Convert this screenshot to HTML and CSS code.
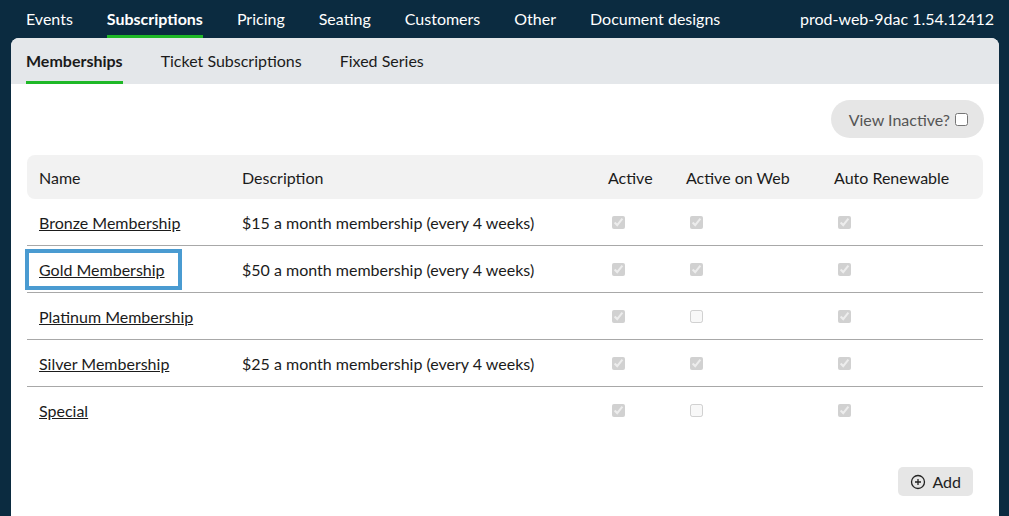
FILE: index.html
```html
<!DOCTYPE html>
<html lang="en">
<head>
  <meta charset="UTF-8">
  <title>Memberships</title>
  <link rel="stylesheet" href="styles.css">
</head>
<body>
  <nav class="topnav">
    <a class="topnav-item">Events</a>
    <a class="topnav-item active">Subscriptions</a>
    <a class="topnav-item">Pricing</a>
    <a class="topnav-item">Seating</a>
    <a class="topnav-item">Customers</a>
    <a class="topnav-item">Other</a>
    <a class="topnav-item">Document designs</a>
    <span class="version">prod-web-9dac 1.54.12412</span>
  </nav>

  <div class="panel">
    <div class="subtabs">
      <a class="subtab active">Memberships</a>
      <a class="subtab">Ticket Subscriptions</a>
      <a class="subtab">Fixed Series</a>
    </div>

    <div class="content">
      <div class="toolbar">
        <label class="inactive-toggle">View Inactive? <input type="checkbox"></label>
      </div>

      <table class="grid">
        <colgroup>
          <col class="col-name">
          <col class="col-desc">
          <col class="col-active">
          <col class="col-web">
          <col class="col-renew">
        </colgroup>
        <thead>
          <tr>
            <th>Name</th>
            <th>Description</th>
            <th>Active</th>
            <th>Active on Web</th>
            <th>Auto Renewable</th>
          </tr>
        </thead>
        <tbody>
          <tr>
            <td><a class="name-link">Bronze Membership</a></td>
            <td>$15 a month membership (every 4 weeks)</td>
            <td><input type="checkbox" checked disabled></td>
            <td><input type="checkbox" checked disabled></td>
            <td><input type="checkbox" checked disabled></td>
          </tr>
          <tr>
            <td><a class="name-link focused">Gold Membership</a></td>
            <td>$50 a month membership (every 4 weeks)</td>
            <td><input type="checkbox" checked disabled></td>
            <td><input type="checkbox" checked disabled></td>
            <td><input type="checkbox" checked disabled></td>
          </tr>
          <tr>
            <td><a class="name-link">Platinum Membership</a></td>
            <td></td>
            <td><input type="checkbox" checked disabled></td>
            <td><input type="checkbox" disabled></td>
            <td><input type="checkbox" checked disabled></td>
          </tr>
          <tr>
            <td><a class="name-link">Silver Membership</a></td>
            <td>$25 a month membership (every 4 weeks)</td>
            <td><input type="checkbox" checked disabled></td>
            <td><input type="checkbox" checked disabled></td>
            <td><input type="checkbox" checked disabled></td>
          </tr>
          <tr>
            <td><a class="name-link">Special</a></td>
            <td></td>
            <td><input type="checkbox" checked disabled></td>
            <td><input type="checkbox" disabled></td>
            <td><input type="checkbox" checked disabled></td>
          </tr>
        </tbody>
      </table>

      <div class="actions">
        <button class="add-button">
          <svg class="add-icon" width="16" height="16" viewBox="0 0 16 16">
            <circle cx="8" cy="8" r="6.5" fill="none" stroke="#222" stroke-width="1.3"/>
            <path d="M8 5v6M5 8h6" stroke="#222" stroke-width="1.3"/>
          </svg>
          Add
        </button>
      </div>
    </div>
  </div>
</body>
</html>
```

FILE: styles.css
```css
body {
  margin: 0;
  background-color: #0b2b40;
  font-family: Lato, "Liberation Sans", sans-serif;
  font-size: 16px;
  color: #1b1b1b;
}
.topnav {
  display: flex;
  align-items: center;
  height: 38px;
  padding: 0 15px 0 26px;
  color: white;
}
.topnav-item {
  display: flex;
  align-items: center;
  height: 38px;
  margin-right: 34px;
  box-sizing: border-box;
  border-bottom: 3px solid transparent;
  padding-top: 1px;
}
.topnav-item.active {
  font-weight: bold;
  border-bottom-color: #1fb827;
}
.version {
  margin-left: auto;
  padding-bottom: 2px;
}
.panel {
  margin: 0 10px 0 11px;
  background-color: white;
  border-radius: 8px 8px 0 0;
  overflow: hidden;
  height: 478px;
}
.subtabs {
  display: flex;
  height: 46px;
  padding-left: 15px;
  background-color: #e4e7ea;
}
.subtab {
  display: flex;
  align-items: center;
  box-sizing: border-box;
  height: 46px;
  margin-right: 38px;
  border-bottom: 3px solid transparent;
  padding-top: 1px;
}
.subtab.active {
  font-weight: bold;
  border-bottom-color: #1fb827;
}
.content {
  padding: 16px 15px 0 16px;
}
.toolbar {
  display: flex;
  justify-content: flex-end;
  margin-bottom: 17px;
}
.inactive-toggle {
  display: flex;
  align-items: center;
  height: 38px;
  padding: 0 16px 0 18px;
  border-radius: 19px;
  background-color: #e6e6e6;
  color: #555;
}
.inactive-toggle input {
  margin: 0 0 0 5px;
}
.grid {
  width: 956px;
  border-collapse: separate;
  border-spacing: 0;
  table-layout: fixed;
}
.col-name { width: 203px; }
.col-desc { width: 366px; }
.col-active { width: 78px; }
.col-web { width: 148px; }
.col-renew { width: 161px; }
.grid th {
  height: 44px;
  padding: 0 12px;
  text-align: left;
  font-weight: normal;
  background-color: #f2f2f2;
}
.grid th:first-child {
  border-radius: 8px 0 0 8px;
}
.grid th:last-child {
  border-radius: 0 8px 8px 0;
}
.grid td {
  height: 46px;
  padding: 0 12px;
  border-bottom: 1px solid #a8a8a8;
}
.grid tbody tr:last-child td {
  border-bottom: none;
}
.grid input {
  margin: 3px 3px 3px 4px;
}
.name-link {
  color: #1b1b1b;
  text-decoration: underline;
}
.name-link.focused {
  padding: 0 6px 0 3px;
  margin-left: -3px;
  outline: 4px solid #4a9bd1;
  outline-offset: 7px;
}
.actions {
  display: flex;
  justify-content: flex-end;
  padding: 34px 11px 0 0;
}
.add-button {
  display: flex;
  align-items: center;
  gap: 6px;
  height: 29px;
  padding: 0 12px;
  border: none;
  border-radius: 5px;
  background-color: #e6e6e6;
  font-family: inherit;
  font-size: 16px;
  color: #222;
}
```
